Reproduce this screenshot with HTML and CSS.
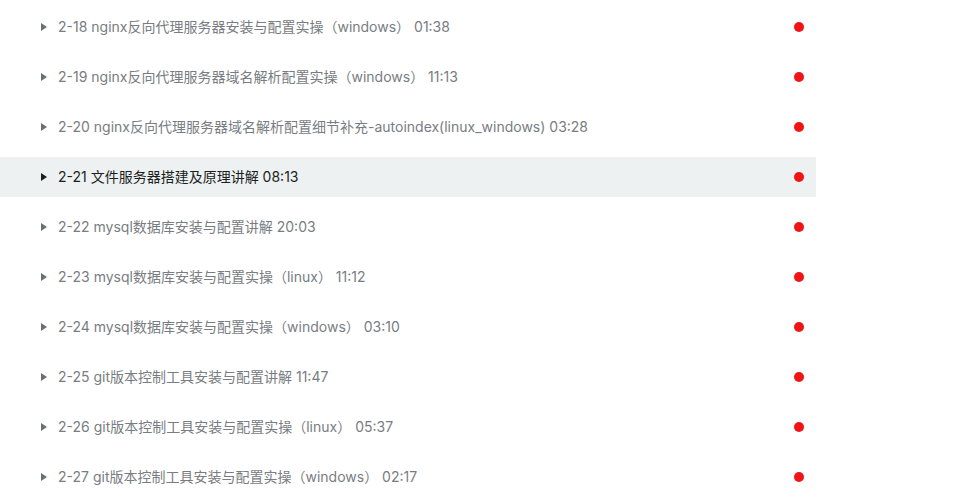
FILE: index.html
```html
<!DOCTYPE html>
<html lang="zh">
<head>
<meta charset="utf-8">
<link rel="stylesheet" href="styles.css">
</head>
<body>
<ul class="list">
  <li class="row"><span class="tri"></span><span class="title">2-18 nginx反向代理服务器安装与配置实操（windows） 01:38</span><span class="dot"></span></li>
  <li class="row"><span class="tri"></span><span class="title">2-19 nginx反向代理服务器域名解析配置实操（windows） 11:13</span><span class="dot"></span></li>
  <li class="row"><span class="tri"></span><span class="title">2-20 nginx反向代理服务器域名解析配置细节补充-autoindex(linux_windows) 03:28</span><span class="dot"></span></li>
  <li class="row active"><span class="tri"></span><span class="title">2-21 文件服务器搭建及原理讲解 08:13</span><span class="dot"></span></li>
  <li class="row"><span class="tri"></span><span class="title">2-22 mysql数据库安装与配置讲解 20:03</span><span class="dot"></span></li>
  <li class="row"><span class="tri"></span><span class="title">2-23 mysql数据库安装与配置实操（linux） 11:12</span><span class="dot"></span></li>
  <li class="row"><span class="tri"></span><span class="title">2-24 mysql数据库安装与配置实操（windows） 03:10</span><span class="dot"></span></li>
  <li class="row"><span class="tri"></span><span class="title">2-25 git版本控制工具安装与配置讲解 11:47</span><span class="dot"></span></li>
  <li class="row"><span class="tri"></span><span class="title">2-26 git版本控制工具安装与配置实操（linux） 05:37</span><span class="dot"></span></li>
  <li class="row"><span class="tri"></span><span class="title">2-27 git版本控制工具安装与配置实操（windows） 02:17</span><span class="dot"></span></li>
</ul>
</body>
</html>
```

FILE: styles.css
```css
html, body {
  margin: 0;
  padding: 0;
  background: #fff;
}
.list {
  list-style: none;
  margin: 0;
  padding: 7px 0 0 0;
  width: 816px;
  display: flex;
  flex-direction: column;
  gap: 10px;
}
.row {
  height: 40px;
  display: flex;
  align-items: center;
  padding-left: 41px;
  padding-right: 12px;
  font-family: "Microsoft YaHei", "Inter", "Noto Sans CJK SC", sans-serif;
  font-size: 14px;
  line-height: 20px;
  color: #787d82;
}
.tri {
  width: 0;
  height: 0;
  border-top: 4px solid transparent;
  border-bottom: 4px solid transparent;
  border-left: 6px solid #6b6f73;
  margin-right: 11px;
  flex: none;
}
.title {
  flex: 1;
  white-space: nowrap;
}
.dot {
  width: 10px;
  height: 10px;
  border-radius: 50%;
  background: #f01414;
  flex: none;
}
.active {
  background: #edf1f1;
  color: #1c1f21;
}
.active .tri {
  border-left-color: #1c1f21;
}
```
